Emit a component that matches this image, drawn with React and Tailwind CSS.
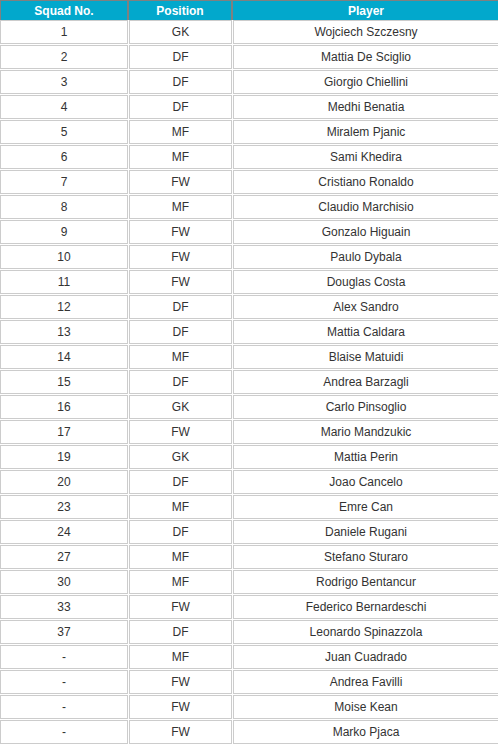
const players = [
  ['1', 'GK', 'Wojciech Szczesny'],
  ['2', 'DF', 'Mattia De Sciglio'],
  ['3', 'DF', 'Giorgio Chiellini'],
  ['4', 'DF', 'Medhi Benatia'],
  ['5', 'MF', 'Miralem Pjanic'],
  ['6', 'MF', 'Sami Khedira'],
  ['7', 'FW', 'Cristiano Ronaldo'],
  ['8', 'MF', 'Claudio Marchisio'],
  ['9', 'FW', 'Gonzalo Higuain'],
  ['10', 'FW', 'Paulo Dybala'],
  ['11', 'FW', 'Douglas Costa'],
  ['12', 'DF', 'Alex Sandro'],
  ['13', 'DF', 'Mattia Caldara'],
  ['14', 'MF', 'Blaise Matuidi'],
  ['15', 'DF', 'Andrea Barzagli'],
  ['16', 'GK', 'Carlo Pinsoglio'],
  ['17', 'FW', 'Mario Mandzukic'],
  ['19', 'GK', 'Mattia Perin'],
  ['20', 'DF', 'Joao Cancelo'],
  ['23', 'MF', 'Emre Can'],
  ['24', 'DF', 'Daniele Rugani'],
  ['27', 'MF', 'Stefano Sturaro'],
  ['30', 'MF', 'Rodrigo Bentancur'],
  ['33', 'FW', 'Federico Bernardeschi'],
  ['37', 'DF', 'Leonardo Spinazzola'],
  ['-', 'MF', 'Juan Cuadrado'],
  ['-', 'FW', 'Andrea Favilli'],
  ['-', 'FW', 'Moise Kean'],
  ['-', 'FW', 'Marko Pjaca'],
]

const cell = 'h-[24px] flex items-center justify-center border border-[#cccccc]'

const App = () => {
  return (
    <div className="w-[498px] overflow-hidden bg-white font-['Liberation_Sans',Arial,sans-serif] text-[12px] text-[#333333]">
      <div className="w-[499px]">
        <div className="flex h-[20px] gap-[2px] bg-[#808080] pt-px pl-px font-bold text-white">
          <div className="w-[126px] flex items-center justify-center bg-[#02a8cc]">Squad No.</div>
          <div className="w-[102px] flex items-center justify-center bg-[#02a8cc]">Position</div>
          <div className="flex-1 flex items-center justify-center bg-[#02a8cc]">Player</div>
        </div>
        <div className="flex flex-col gap-px">
          {players.map(([no, pos, name], i) => (
            <div key={i} className="flex gap-px">
              <div className={`w-[128px] ${cell}`}>{no}</div>
              <div className={`w-[103px] ${cell}`}>{pos}</div>
              <div className={`flex-1 ${cell}`}>{name}</div>
            </div>
          ))}
        </div>
      </div>
    </div>
  )
}

export default App
